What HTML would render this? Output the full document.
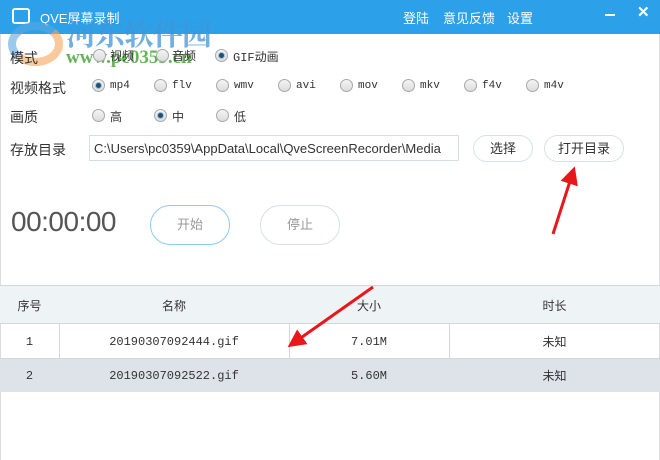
<!DOCTYPE html>
<html><head><meta charset="utf-8"><style>
*{margin:0;padding:0;box-sizing:border-box}
body{width:660px;height:460px;overflow:hidden;background:#fff;font-family:"Liberation Sans","Noto Sans CJK SC",sans-serif;position:relative;color:#333}
.abs{position:absolute}
.bar{left:0;top:0;width:660px;height:34px;background:#2ca1ea}
.t{color:#fff;font-size:13px}
.lbl{font-size:14px;color:#333}
.r{position:absolute;width:13px;height:13px;border-radius:50%;border:1px solid #a8a8a8;background:linear-gradient(#f4f4f4,#dcdcdc)}
.r.on::after{content:"";position:absolute;left:3px;top:3px;width:5px;height:5px;border-radius:50%;background:#2d4a66;box-shadow:0 0 0 1px #8cc4ea}
.m{font-family:"Liberation Mono","Noto Sans CJK SC",monospace;font-size:11px;color:#333}
.btn{position:absolute;border:1px solid #d6e0e6;border-radius:14px;text-align:center;font-size:13px;color:#333;background:#fff}
.cell{position:absolute;font-size:12px;text-align:center}
</style></head><body>
<div class="abs bar"></div>
<div class="abs" style="left:12px;top:8px;width:18px;height:16px;border:2px solid #fff;border-radius:3px"></div>
<div class="abs t" style="left:40px;top:8px">QVE屏幕录制</div>
<div class="abs t" style="left:403px;top:8px">登陆</div>
<div class="abs t" style="left:443px;top:8px">意见反馈</div>
<div class="abs t" style="left:507px;top:8px">设置</div>
<div class="abs" style="left:605px;top:14px;width:10px;height:2px;background:#fff"></div>
<div class="abs t" style="left:637px;top:3px;font-size:15px;font-weight:bold">✕</div>
<div class="abs" style="left:66px;top:10px;font-size:30px;font-weight:bold;color:#3f95d8;opacity:.75;font-family:'Noto Serif CJK SC',serif;letter-spacing:-1px">河东软件园</div>
<div class="abs" style="left:66px;top:47px;font-size:19px;font-weight:bold;color:#49a83a;opacity:.85;font-family:'Liberation Serif',serif">www.pc0359.cn</div>
<div class="abs" style="left:8px;top:22px;width:55px;height:44px;border-radius:50%;border:8px solid #f6a55a;opacity:.6;border-left-color:#5aa8e0;border-top-color:#5aa8e0"></div>

<div class="abs lbl" style="left:10px;top:48px">模式</div>
<div class="r" style="left:93px;top:49px"></div><div class="abs lbl" style="left:110px;top:47px;font-size:12px">视频</div>
<div class="r" style="left:156px;top:49px"></div><div class="abs lbl" style="left:172px;top:47px;font-size:12px">音频</div>
<div class="r on" style="left:215px;top:49px"></div><div class="abs m" style="left:233px;top:48px;font-size:12px">GIF动画</div>

<div class="abs lbl" style="left:10px;top:78px">视频格式</div>
<div class="r on" style="left:92px;top:79px"></div><div class="abs m" style="left:110px;top:80px">mp4</div>
<div class="r" style="left:154px;top:79px"></div><div class="abs m" style="left:172px;top:80px">flv</div>
<div class="r" style="left:216px;top:79px"></div><div class="abs m" style="left:234px;top:80px">wmv</div>
<div class="r" style="left:278px;top:79px"></div><div class="abs m" style="left:296px;top:80px">avi</div>
<div class="r" style="left:340px;top:79px"></div><div class="abs m" style="left:358px;top:80px">mov</div>
<div class="r" style="left:402px;top:79px"></div><div class="abs m" style="left:420px;top:80px">mkv</div>
<div class="r" style="left:464px;top:79px"></div><div class="abs m" style="left:482px;top:80px">f4v</div>
<div class="r" style="left:526px;top:79px"></div><div class="abs m" style="left:544px;top:80px">m4v</div>

<div class="abs lbl" style="left:10px;top:107px">画质</div>
<div class="r" style="left:92px;top:109px"></div><div class="abs lbl" style="left:110px;top:108px;font-size:12px">高</div>
<div class="r on" style="left:154px;top:109px"></div><div class="abs lbl" style="left:172px;top:108px;font-size:12px">中</div>
<div class="r" style="left:216px;top:109px"></div><div class="abs lbl" style="left:234px;top:108px;font-size:12px">低</div>

<div class="abs lbl" style="left:10px;top:140px">存放目录</div>
<div class="abs" style="left:89px;top:135px;width:370px;height:26px;border:1px solid #d6dde3;font-size:13px;padding:5px 4px;color:#333;white-space:nowrap;overflow:hidden">C:\Users\pc0359\AppData\Local\QveScreenRecorder\Media</div>
<div class="btn" style="left:473px;top:135px;width:60px;height:27px;line-height:25px">选择</div>
<div class="btn" style="left:544px;top:135px;width:80px;height:27px;line-height:25px">打开目录</div>

<div class="abs" style="left:11px;top:206px;font-size:28px;color:#555;letter-spacing:-0.5px">00:00:00</div>
<div class="btn" style="left:150px;top:205px;width:80px;height:40px;line-height:38px;border-radius:20px;border-color:#8ccbf2;color:#999">开始</div>
<div class="btn" style="left:260px;top:205px;width:80px;height:40px;line-height:38px;border-radius:20px;color:#999">停止</div>

<div class="abs" style="left:0;top:34px;width:1px;height:426px;background:#ddd"></div>
<div class="abs" style="left:659px;top:34px;width:1px;height:426px;background:#ddd"></div>
<div class="abs" style="left:0;top:285px;width:660px;height:39px;background:#eef3f6;border-top:1px solid #d6d6d6;border-bottom:1px solid #d6d6d6"></div>
<div class="cell" style="left:0;top:297px;width:59px">序号</div>
<div class="cell" style="left:59px;top:297px;width:230px">名称</div>
<div class="cell" style="left:289px;top:297px;width:160px">大小</div>
<div class="cell" style="left:449px;top:297px;width:211px">时长</div>
<div class="abs" style="left:59px;top:324px;width:1px;height:34px;background:#d6d6d6"></div>
<div class="abs" style="left:289px;top:324px;width:1px;height:34px;background:#d6d6d6"></div>
<div class="abs" style="left:449px;top:324px;width:1px;height:34px;background:#d6d6d6"></div>
<div class="abs" style="left:0;top:358px;width:660px;height:34px;background:#dde3e9;border-top:1px solid #d6d6d6"></div>
<div class="cell m" style="left:0;top:335px;width:59px">1</div>
<div class="cell m" style="left:59px;top:335px;width:230px">20190307092444.gif</div>
<div class="cell m" style="left:289px;top:335px;width:160px">7.01M</div>
<div class="cell" style="left:449px;top:333px;width:211px">未知</div>
<div class="cell m" style="left:0;top:369px;width:59px">2</div>
<div class="cell m" style="left:59px;top:369px;width:230px">20190307092522.gif</div>
<div class="cell m" style="left:289px;top:369px;width:160px">5.60M</div>
<div class="cell" style="left:449px;top:367px;width:211px">未知</div>

<svg class="abs" style="left:0;top:0" width="660" height="460">
<defs><marker id="a" markerWidth="6" markerHeight="6" refX="3" refY="3" orient="auto"><path d="M0,0L6,3L0,6z" fill="#e8181a"/></marker></defs>
<line x1="553" y1="234" x2="572" y2="175" stroke="#e8181a" stroke-width="3" marker-end="url(#a)"/>
<line x1="373" y1="287" x2="295" y2="342" stroke="#e8181a" stroke-width="3" marker-end="url(#a)"/>
</svg>
</body></html>
